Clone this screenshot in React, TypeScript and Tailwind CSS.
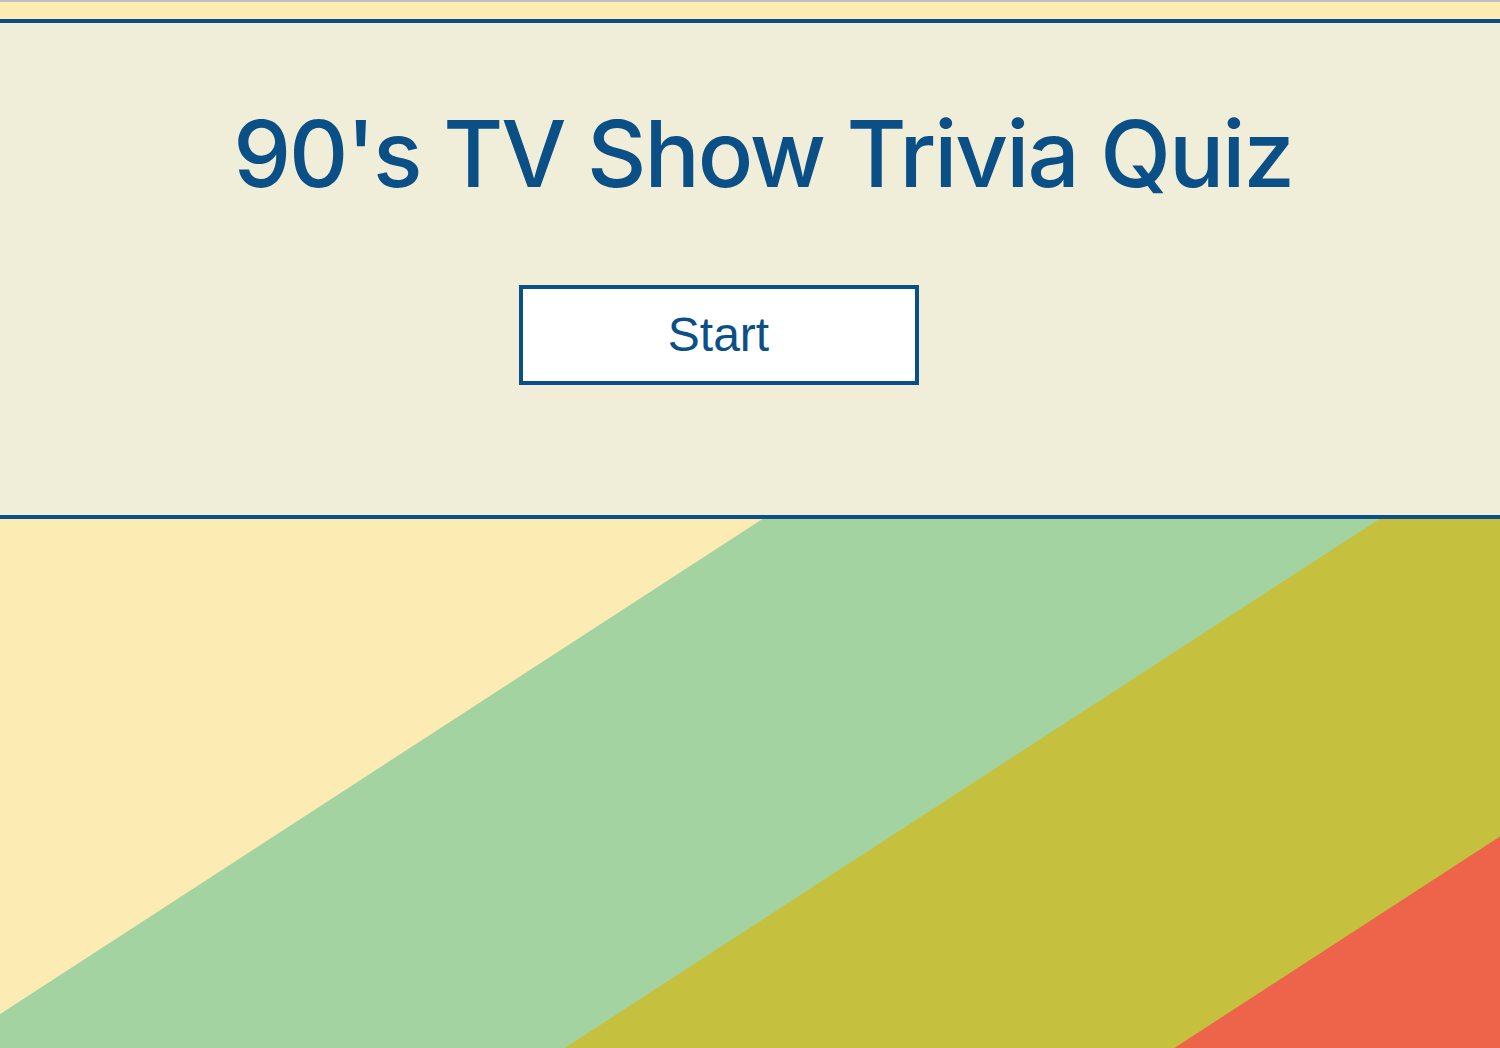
import React from 'react';

// Title screen for the quiz: striped backdrop with a banner panel
const App: React.FC = () => {
  return (
    <div className="h-screen w-full overflow-hidden bg-[linear-gradient(147deg,#fdebb4_850px,#a4d3a2_851px,#a4d3a2_1186px,#c6c03f_1187px,#c6c03f_1518px,#ee644b_1519px)]">
      <div className="h-[2px] bg-[#c2bec8]" />

      {/* Banner */}
      <section className="mt-[17px] h-[500px] border-y-4 border-[#0b4f87] bg-[#f0eed9] flex flex-col items-center">
        <h1 className="mt-[85px] ml-[26px] font-['Inter',sans-serif] text-[92px] leading-none tracking-[-2px] font-medium text-[#0b4f87] whitespace-nowrap">
          90's TV Show Trivia Quiz
        </h1>
        <button className="mt-[85px] -ml-[63px] w-[400px] h-[100px] border-4 border-[#0b4f87] bg-white flex items-center justify-center font-['Liberation_Sans',Arial,sans-serif] text-[48px] text-[#0b4f87]">
          Start
        </button>
      </section>
    </div>
  );
};

export default App;
